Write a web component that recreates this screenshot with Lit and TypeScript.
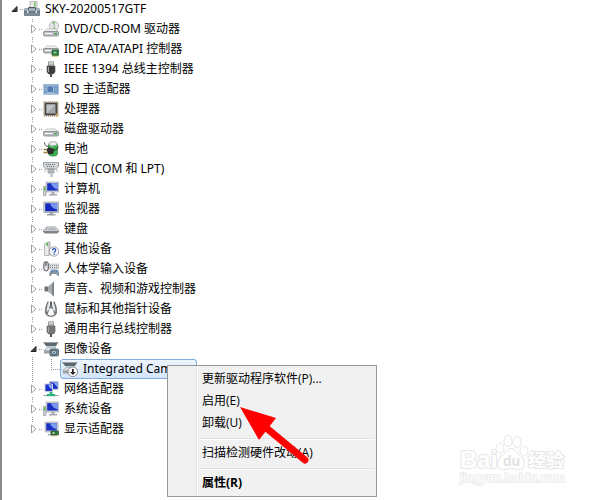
import { LitElement, html, svg, css, nothing, TemplateResult } from "lit";
import { customElement, property, state } from "lit/decorators.js";
import { classMap } from "lit/directives/class-map.js";

interface Device {
  name: string;
  icon: string;
  open?: boolean;
  selected?: boolean;
  children?: Device[];
}

const monitor = svg`
  <path d="M3 1h13v10H3z" fill="#d3d7db" stroke="#9a9fa6" stroke-width=".6"/>
  <path d="M4.200 2.200h10.600v7.400H4.200z" fill="#1a2fc4"/>
  <path d="M8 2.200h6.800v6c-3-.5-6-3-6.800-6z" fill="#7c9bf0"/>
  <path d="M8.500 11h3v2h2.500v1.500H6V13h2.500z" fill="#a4a9af"/>`;

const camera = svg`
  <path d="M0 1h15.500l-2.500 4H3z" fill="#5c686e"/>
  <path d="M1 1.500h13.500" stroke="#99a5aa"/>
  <path d="M3 5h10v1.500H3z" fill="#b7d5df"/>
  <path d="M1 9l4-2.500h8L10 10H1z" fill="#e3e6e8" stroke="#999" stroke-width=".6"/>
  <path d="M1 9.500h7V12.500H1z" fill="#9ba1a5"/>`;

const drive = svg`
  <path d="M3.500 8h9l3 3H.5z" fill="#f2f3f3" stroke="#aaa" stroke-width=".6"/>
  <rect x=".5" y="10.500" width="15" height="4.500" rx="1.500" fill="#bfc2c5" stroke="#7c8186" stroke-width=".8"/>
  <path d="M2 12.500h7" stroke="#f8f8f8"/>`;

const plug = (body: string) => svg`
  <path d="M5.500 .8h5V5h-5z" fill="#e6e6e6" stroke="#888" stroke-width=".8"/>
  <path d="M7 2.500v1.500M9 2.500v1.500" stroke="#666" stroke-width=".8"/>
  <path d="M4 5h8v6l-1.500 2h-5L4 11z" fill="${body}" stroke="#555" stroke-width=".6"/>
  <path d="M5.500 6v5" stroke="#aaa"/>
  <path d="M7 13h2v3H7z" fill="#555"/>`;

const icons: Record<string, TemplateResult> = {
  computer: svg`
    <path d="M6 .5h7v8H6z" fill="#e9ece9" stroke="#9ba19b" stroke-width=".7"/>
    <path d="M10 1.500h1.500v4H10z" fill="#63bd55"/>
    <path d="M1 7h14l1 2v6H0V9z" fill="#7b8b97"/>
    <path d="M1.500 7.500h13l.8 2H.7z" fill="#b4c0ca"/>
    <path d="M4.500 9V6.500h7V9" fill="none" stroke="#505c66"/>
    <path d="M0 11h16" stroke="#505c66" stroke-width=".8"/>
    <path d="M3 10h1.500v2H3zM11.500 10H13v2h-1.500z" fill="#e6ebee"/>`,
  dvd: svg`
    <circle cx="11" cy="5" r="4.700" fill="#e6e8ea" stroke="#999" stroke-width=".6"/>
    <path d="M11 5L9 .8h3zM11 5l2 4h-3z" fill="#74bf60"/>
    <circle cx="11" cy="5" r="1.200" fill="#fff" stroke="#999" stroke-width=".5"/>
    ${drive}<path d="M11 12.700h3" stroke="#42a342" stroke-width="1.500"/>`,
  ide: svg`
    <g transform="translate(0 -3)">${drive}</g>
    <path d="M9 9h6.500v5.500H9z" fill="#277a38" stroke="#16592a" stroke-width=".6"/>
    <path d="M10.500 10.500h3v2h-3z" fill="#92c79b"/>
    <path d="M10 14.500V16M12 14.500V16M14 14.500V16" stroke="#c4a338"/>`,
  firewire: plug("#3c3c3c"),
  usb: plug("#75787b"),
  sd: svg`
    <path d="M.5 3h15v10.500H.5z" fill="#6d94c0"/>
    <path d="M.5 3h15v1.500H.5zM.5 12h15v1.500H.5z" fill="#9bb9da"/>
    <path d="M4 5h6.500v6.500H4z" fill="#517cad" stroke="#b3cbe6" stroke-width=".8"/>
    <path d="M13 5v6M2 5v6" stroke="#d2e1f1" stroke-dasharray="1 1"/>`,
  cpu: svg`
    <path d="M.8.8h14.400v14.400H.8z" fill="none" stroke="#a58040" stroke-dasharray="1 1"/>
    <path d="M1.500 1.500h13v13h-13z" fill="#444"/>
    <path d="M3.500 3.500h9v9h-9z" fill="#a5a7a9"/><path d="M3.500 3.500h9l-9 9z" fill="#c0c2c4"/>
    <path d="M12.500 12.500h2v2h-2z" fill="#d6a83f"/>`,
  disk: svg`${drive}<path d="M11 12.700h3" stroke="#42b242" stroke-width="1.600"/>`,
  battery: svg`
    <rect x="5.500" y="1.500" width="9" height="13.500" rx="3" fill="#36b34c" stroke="#347b3e" stroke-width=".7"/>
    <ellipse cx="10" cy="2.800" rx="4" ry="2.200" fill="#e8ece8" stroke="#888" stroke-width=".6"/>
    <path d="M8.500 5.500v6" stroke="#bdf2bf" stroke-width="1.500"/>
    <path d="M1.500 1.500c0 3 2 4 4 4" stroke="#4b4b4b" fill="none"/>
    <path d="M5 6.500h3.500l3 2-1.500 4.500H5L3.500 9z" fill="#303030"/>
    <path d="M.5 8.500H4M.5 11.500H5" stroke="#9c8745" stroke-width="1.500"/>
    <path d="M11 9c3 0 4-2 4-3.500" stroke="#303030" fill="none"/>`,
  port: svg`
    <path d="M.5 1.500h15v4L13 8H3L.5 5.500z" fill="#d2d6d9" stroke="#90969b" stroke-width=".8"/>
    <path d="M3 3.500h10M4 5.500h8" stroke="#687078" stroke-dasharray="1 1"/>
    <path d="M5 8h6v4H5z" fill="#b4b9bd" stroke="#8c9399" stroke-width=".7"/>
    <path d="M7 12h3v4H7z" fill="#c8cccf"/>
    <path d="M2 8v3M14 8v3" stroke="#b0b5b9"/>`,
  pc: svg`${monitor}
    <path d="M.4 5.500h2.600v9H.4z" fill="#cfd3d6" stroke="#858b90" stroke-width=".6"/>
    <path d="M1 6.500h1.400v3H1z" fill="#49bf3e"/>`,
  monitor: svg`
    <path d="M.8 1h14.700v10.500H.8z" fill="#d0d4d8" stroke="#8f959c" stroke-width=".7"/>
    <path d="M2.200 2.300h12v8h-12z" fill="#1428bd"/>
    <path d="M7 2.300h7.200v6.200C10.500 8 8 6 7 2.300z" fill="#7696ee"/>
    <path d="M6.500 11.500h3.500V13h2.500v1.500H4V13h2.500z" fill="#9aa0a6"/>`,
  keyboard: svg`
    <path d="M3.500 5.500h9l3.500 4v1.500L14 12.500H2L0 11V9.500z" fill="#7e848a"/>
    <path d="M3.500 5.500h9L15.500 10H.5z" fill="#d8dbde"/>
    <path d="M3.500 7h9M2.500 8.700h11.500" stroke="#8b9197" stroke-dasharray="1.500 .8"/>`,
  other: svg`
    <path d="M1.500 2.500L6 .8v13.700H1.500z" fill="#eceeec" stroke="#999c99" stroke-width=".7"/>
    <path d="M6 .8h1.500v13.700H6z" fill="#b6b9b6"/>
    <path d="M3.500 2h1.500v3H3.500z" fill="#56b548"/>
    <circle cx="11" cy="10.500" r="4.700" fill="#f1f4f9" stroke="#8b919a" stroke-width=".8"/>
    <path d="M9.500 9.300c0-2.200 3.200-2.200 3.200 0 0 1.200-1.600 1-1.600 2.400M11.100 12.500v1.200" fill="none" stroke="#2150ae" stroke-width="1.200"/>`,
  hid: svg`
    <path d="M6 3h10v5H6z" fill="#dcdfe1" stroke="#a5a9ad" stroke-width=".5"/>
    <path d="M7 4.500h8.500M7 6.500h8.500" stroke="#858a90" stroke-dasharray="1 1"/>
    <rect x=".8" y=".8" width="4.500" height="9" rx="2" fill="#e1e3e5" stroke="#4d5358"/>
    <path d="M3 1v4" stroke="#353a3f"/>
    <path d="M7 15c-1-4 1-6 2.500-6h3.500c2 0 3.500 2 2.500 6l-2.500-2.500H9.500z" fill="#8d9aa6" stroke="#66717c" stroke-width=".6"/>
    <path d="M8.500 10.500h2M13 10.500h1" stroke="#348ee4" stroke-width="1.500"/>`,
  sound: svg`
    <path d="M1.500 5.500H5v5H1.500z" fill="#6b7278"/>
    <path d="M5 5.500L11 .5v15L5 10.500z" fill="#a6abaf"/>
    <path d="M9 2.200L11 .5v15l-2-1.700z" fill="#7d858c"/>`,
  mouse: svg`
    <path d="M5 .5C3 4 2 8 2.500 12c.5 4.500 10.500 4.500 11 0C14 8 13 4 11 .5L10 6H6z" fill="#71787d" stroke="#54595d" stroke-width=".6"/>
    <path d="M5.500 1C4 5 3.500 8 3.800 11l2.700-3zM10.500 1C12 5 12.500 8 12.200 11L9.500 8z" fill="#e6e8ea"/>
    <path d="M6 9.500c1-3 3-3 4 0l1.500 4c-2 1.500-5 1.500-7 0z" fill="#fafafa"/>
    <path d="M7.200.5h1.600v5H7.200z" fill="#333"/>`,
  imaging: svg`${camera}
    <rect x="7" y="8" width="8.500" height="7" rx="1" fill="#718894" stroke="#4d5b63" stroke-width=".7"/>
    <circle cx="11" cy="11.500" r="2.400" fill="#e4edf2" stroke="#355466"/>
    <circle cx="11" cy="11.500" r="1" fill="#365c77"/>`,
  disabled: svg`${camera}
    <circle cx="10.800" cy="10.800" r="4.800" fill="#fafafa" stroke="#777" stroke-width=".8"/>
    <path d="M10 8h1.700v3h2l-2.850 3L8 11h2z" fill="#222"/>`,
  network: svg`
    <path d="M6.500 .8h8.500v7.500H6.500z" fill="#1a31c9" stroke="#b9c0ca"/>
    <path d="M10 1.300h4.500v5z" fill="#8aa5f3"/>
    <path d="M2 3h7.500v7.500H2z" fill="#1a31c9" stroke="#c4cad2"/>
    <path d="M5.500 3.500H9v4.500C7 7.500 5.500 6 5.500 3.500z" fill="#8aa5f3"/>
    <path d="M6.500 11h3v2.500h-3zM4 13h8v2.200H4z" fill="#2fb57b"/>
    <path d="M.5 14.500H4M12 14.500h3.500" stroke="#8e979d"/>`,
  display: svg`<g transform="translate(-1 0)">${monitor}</g>
    <path d="M8 10h7.500v4H8z" fill="#347a3a" stroke="#1b5127" stroke-width=".6"/>
    <path d="M9.500 11h2v2h-2z" fill="#aed0a1"/>
    <path d="M9 14.300v1.200M11 14.300v1.200M13 14.300v1.200" stroke="#c5a748"/>`,
};

const devices: Device = {
  name: "SKY-20200517GTF",
  icon: "computer",
  open: true,
  children: [
    { name: "DVD/CD-ROM 驱动器", icon: "dvd" },
    { name: "IDE ATA/ATAPI 控制器", icon: "ide" },
    { name: "IEEE 1394 总线主控制器", icon: "firewire" },
    { name: "SD 主适配器", icon: "sd" },
    { name: "处理器", icon: "cpu" },
    { name: "磁盘驱动器", icon: "disk" },
    { name: "电池", icon: "battery" },
    { name: "端口 (COM 和 LPT)", icon: "port" },
    { name: "计算机", icon: "pc" },
    { name: "监视器", icon: "monitor" },
    { name: "键盘", icon: "keyboard" },
    { name: "其他设备", icon: "other" },
    { name: "人体学输入设备", icon: "hid" },
    { name: "声音、视频和游戏控制器", icon: "sound" },
    { name: "鼠标和其他指针设备", icon: "mouse" },
    { name: "通用串行总线控制器", icon: "usb" },
    {
      name: "图像设备",
      icon: "imaging",
      open: true,
      children: [{ name: "Integrated Camera", icon: "disabled", selected: true }],
    },
    { name: "网络适配器", icon: "network" },
    { name: "系统设备", icon: "pc" },
    { name: "显示适配器", icon: "display" },
  ],
};

@customElement("device-node")
class DeviceNode extends LitElement {
  @property({ attribute: false }) device!: Device;
  @property({ type: Boolean }) root = false;
  @property({ type: Boolean }) leaf = false;
  @state() private open = false;

  static styles = css`
    :host {
      display: block;
      --dots: repeating-linear-gradient(to bottom, #999 0 1px, transparent 1px 2px);
      background: var(--dots) 7px 0 / 1px 100% no-repeat;
    }
    :host([root]) {
      background: none;
    }
    :host([last]) {
      background-size: 1px 10px;
    }
    .row {
      display: flex;
      align-items: center;
      height: 20px;
    }
    .expander {
      flex: none;
      display: flex;
      align-items: center;
      justify-content: flex-end;
      width: 14px;
      height: 14px;
      padding: 0 2px 0 0;
      border: 0;
      background: #fff;
    }
    .stub {
      flex: none;
      width: 4px;
      height: 1px;
      background: repeating-linear-gradient(to right, #999 0 1px, transparent 1px 2px);
    }
    .leaf .stub {
      width: 9px;
      margin-left: 7px;
    }
    .label {
      display: flex;
      align-items: center;
      gap: 5px;
      height: 20px;
      box-sizing: border-box;
      white-space: nowrap;
    }
    .selected {
      padding: 0 6px 0 1px;
      border: 1px solid #84acdd;
      border-radius: 3px;
      background: linear-gradient(#edf4fd, #d3e5fb);
    }
    .icon {
      flex: none;
      display: block;
    }
    .children {
      padding-left: 19px;
    }
  `;

  willUpdate(changed: Map<string, unknown>) {
    if (changed.has("device")) this.open = !!this.device.open;
  }

  private toggle() {
    this.open = !this.open;
  }

  render() {
    const { name, icon, selected, children = [] } = this.device;
    return html`
      <div class=${classMap({ row: true, leaf: this.leaf })}>
        ${this.leaf
          ? nothing
          : html`<button class="expander" aria-label=${name} aria-expanded=${this.open} @click=${this.toggle}>
              <svg width="8" height="10" viewBox="0 0 8 10">
                ${this.open
                  ? svg`<path d="M7 2.500v5H2z" fill="#444" stroke="#222"/>`
                  : svg`<path d="M2.500 1v8L7 5z" fill="#fff" stroke="#a0a0a0"/>`}
              </svg>
            </button>`}
        <span class="stub"></span>
        <span class=${classMap({ label: true, selected: !!selected })}>
          <svg class="icon" width="16" height="16" viewBox="0 0 16 16" aria-hidden="true">${icons[icon]}</svg>
          <span>${name}</span>
        </span>
      </div>
      ${this.open && children.length
        ? html`<div class="children" role="group">
            ${children.map(
              (child, i) => html`<device-node
                role="treeitem"
                .device=${child}
                ?leaf=${!this.root}
                ?last=${i === children.length - 1}
              ></device-node>`,
            )}
          </div>`
        : nothing}
    `;
  }
}

@customElement("context-menu")
class ContextMenu extends LitElement {
  static styles = css`
    :host {
      display: block;
      box-sizing: border-box;
      padding: 2px;
      border: 1px solid #979797;
      background: linear-gradient(to right, #f0f0f0 28px, #e2e2e2 28px 29px, #fff 29px 30px, #f1f1f1 30px);
      font: 12px/22px "Open Sans", "Noto Sans CJK SC", sans-serif;
    }
    button {
      display: block;
      width: 100%;
      height: 22px;
      padding: 0 0 0 32px;
      border: 0;
      background: none;
      color: #000;
      font: inherit;
      text-align: left;
      white-space: nowrap;
    }
    hr {
      height: 1px;
      margin: 4px 0 2px 28px;
      border: 0;
      border-top: 1px solid #e0e0e0;
      background: #fff;
    }
    .default {
      font-weight: 700;
    }
  `;

  render() {
    return html`
      <button role="menuitem">更新驱动程序软件(P)...</button>
      <button role="menuitem">启用(E)</button>
      <button role="menuitem">卸载(U)</button>
      <hr />
      <button role="menuitem">扫描检测硬件改动(A)</button>
      <hr />
      <button role="menuitem" class="default">属性(R)</button>
    `;
  }
}

@customElement("app-root")
class AppRoot extends LitElement {
  static styles = css`
    :host {
      display: block;
      position: relative;
      box-sizing: border-box;
      min-height: 100vh;
      overflow: hidden;
      border-left: 2px solid #8c8c8c;
      background: #fff;
      color: #000;
      font: 12px/20px "Noto Sans", "Noto Sans CJK SC", sans-serif;
    }
    .tree {
      margin-top: -1px;
      padding-left: 4px;
    }
    .menu {
      position: absolute;
      left: 165px;
      top: 365px;
      width: 210px;
    }
    .arrow {
      position: absolute;
      left: 234px;
      top: 403px;
    }
    .watermark {
      position: absolute;
      right: 30px;
      bottom: 10px;
    }
    .brand {
      font-family: "Liberation Sans", "Noto Sans CJK SC", sans-serif;
      font-weight: 700;
      fill: #fff;
      stroke: #e6e6e6;
      stroke-width: 2px;
      stroke-linejoin: round;
      paint-order: stroke;
    }
    .big {
      font-size: 24px;
    }
    .paw {
      font-size: 14px;
      fill: #e2e2e2;
      stroke: none;
    }
    .cjk {
      font-size: 18px;
    }
    .site {
      font-size: 13px;
      font-weight: 400;
      stroke: #ececec;
    }
  `;

  render() {
    return html`
      <div class="tree" role="tree">
        <device-node root role="treeitem" .device=${devices}></device-node>
      </div>
      <context-menu class="menu" role="menu"></context-menu>
      <svg class="arrow" width="76" height="64" viewBox="0 0 76 64" aria-hidden="true">
        <path d="M28 23L69 57" stroke="#f00" stroke-width="7" stroke-linecap="round" />
        <path d="M4 4l36 11-17 22z" fill="#f00" />
      </svg>
      <svg class="watermark" width="112" height="56" viewBox="0 0 112 56">
        <g class="brand">
          <text class="big" x="2" y="34">Bai</text>
          <path
            d="M53 15c-5 0-6 5-10 8-5 5-3 12 3 12 4 0 5-1 7-1s3 1 7 1c6 0 8-7 3-12-4-3-5-8-10-8z"
          />
          <ellipse cx="42" cy="14" rx="3.500" ry="4.500" />
          <ellipse cx="50" cy="7" rx="3.500" ry="5" />
          <ellipse cx="59" cy="8" rx="3.500" ry="5" />
          <ellipse cx="66" cy="17" rx="3.500" ry="4.500" />
          <text class="paw" x="45" y="32">du</text>
          <text class="cjk" x="70" y="33">经验</text>
          <text class="site" x="2" y="48">jingyan.baidu.com</text>
        </g>
      </svg>
    `;
  }
}
